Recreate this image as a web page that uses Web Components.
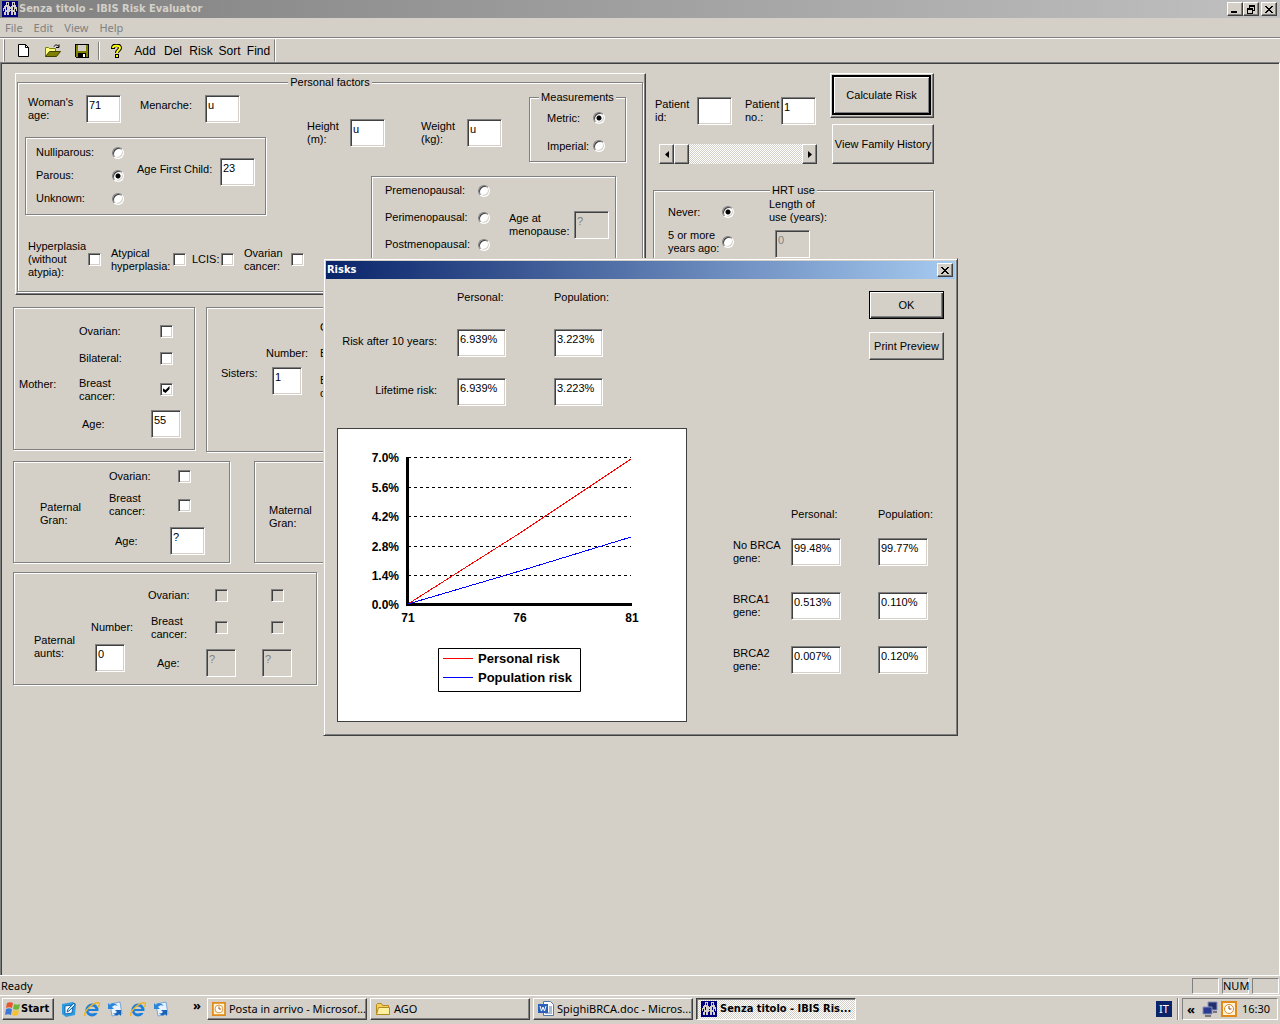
<!DOCTYPE html>
<html lang="it">
<head>
<meta charset="utf-8">
<title>Senza titolo - IBIS Risk Evaluator</title>
<style>
html,body{margin:0;height:100%;background:#d4d0c8;overflow:hidden}
body{font:11px/13px "Liberation Sans",Arial,sans-serif;color:#000}
</style>
</head>
<body>
<ibis-app></ibis-app>
<script>
const base = `
*{box-sizing:border-box}
:host{display:block}
:host([hidden]){display:none}
label,span{white-space:nowrap}
input,button{font:inherit;color:inherit;margin:0}
input[type=text]{width:35px;height:28px;padding:1px 2px 10px;border:1px solid;border-color:#808080 #fff #fff #808080;border-radius:0;background:#fff;box-shadow:inset 1px 1px #404040,inset -1px -1px #d4d0c8;outline:0}
input[type=text]:disabled{background:#d4d0c8;color:#808080}
input.s{width:30px}
input[type=checkbox]{appearance:none;width:13px;height:13px;border:1px solid;border-color:#808080 #fff #fff #808080;background:#fff;box-shadow:inset 1px 1px #404040,inset -1px -1px #d4d0c8;position:relative}
input[type=checkbox]:disabled{background:#d4d0c8}
input[type=checkbox]:checked::after{content:"";position:absolute;inset:2px;background:#000;clip-path:polygon(0 28%,43% 58%,100% 0,100% 42%,43% 100%,0 70%)}
input[type=radio]{appearance:none;width:12px;height:12px;border-radius:50%;border:1px solid;border-color:#808080 #fff #fff #808080;background:#fff;box-shadow:inset 1px 1px #404040,inset -1px -1px #d4d0c8}
input[type=radio]:checked{background:radial-gradient(circle,#000 2px,#fff 3px)}
button{padding:0;border:1px solid;border-color:#fff #404040 #404040 #fff;border-radius:0;background:#d4d0c8;box-shadow:inset -1px -1px #808080}
.g{display:grid;justify-items:start;align-items:center}
.top{align-items:start}
.two{padding-top:1px}
.one{padding-top:4px}
.mid{padding-top:5px}
`;
const ui = '"Noto Sans","Open Sans",sans-serif';
const uiBold = '"DejaVu Sans Condensed","Noto Sans",sans-serif';
function define(name, css, html){
  const t = document.createElement('template');
  t.innerHTML = `<style>${base}${css}</style>${html}`;
  customElements.define(name, class extends HTMLElement{
    constructor(){ super(); this.attachShadow({mode:'open'}).append(t.content.cloneNode(true)); }
  });
}

class GroupBox extends HTMLElement{
  constructor(){
    super();
    const title = this.getAttribute('legend');
    this.attachShadow({mode:'open'}).innerHTML = `<style>
      :host{display:block}
      fieldset{box-sizing:border-box;height:100%;margin:0;padding:0;min-width:0;border:1px solid #808080;box-shadow:1px 1px #fff,inset 1px 1px #fff}
      legend{margin:0 auto;padding:0 2px;background:#d4d0c8}
    </style><fieldset>${title?`<legend>${title}</legend>`:''}<slot></slot></fieldset>`;
  }
}
customElements.define('group-box', GroupBox);

const people = `<svg width="16" height="16" viewBox="0 0 16 16" shape-rendering="crispEdges"><path fill="#000080" d="M0 0h16v16H0z"/><path fill="#d4d0c8" d="M4 1h3v1H4zM4 2h1v2H4zM6 2h1v2H6zM10 1h3v1h-3zM10 2h1v2h-1zM12 2h1v2h-1zM3 4h4v1h1v1h1V5h1V4h4v2h1v4h-1V8h-1v3h1v3h-2v-3h-1v3H9v-4H8v1H7v3H5v-3H4v3H2v-3h1V8H2v2H1V7h1V5h1z"/><path fill="#000080" d="M4 6h1v3H4zM12 6h-1v3h1zM8 8h1v1H8z"/></svg>`;
const glyph = {
 min:`<svg width="8" height="8" shape-rendering="crispEdges"><path d="M0 6h6v2H0z"/></svg>`,
 max:`<svg width="9" height="9" shape-rendering="crispEdges"><path fill="none" stroke="#000" d="M2.5 3V1.5h5v4H6M.5 4.5h5v4h-5zM2 .5h6M0 3.5h6"/></svg>`,
 close:`<svg width="8" height="7" viewBox="0 0 8 7" shape-rendering="crispEdges"><path d="M0 0h2v1h1v1h2V1h1V0h2v1H7v1H6v1H5v1h1v1h1v1h1v1H6V6H5V5H3v1H2v1H0V6h1V5h1V4h1V3H2V2H1V1H0z"/></svg>`
};
const clock = `<svg width="16" height="16" viewBox="0 0 16 16"><path fill="#fff3d6" stroke="#e08a1c" stroke-width="2" d="M1 1h14v14H1z"/><circle cx="8" cy="8" r="4.5" fill="#fff" stroke="#d98b2b"/><path d="M8 5v3h2.500" fill="none" stroke="#8a4a00"/></svg>`;
const ie = `<svg width="16" height="16" viewBox="0 0 16 16"><circle cx="8" cy="9" r="5" fill="none" stroke="#1c7fdc" stroke-width="3"/><path d="M4 9h9" stroke="#1c7fdc" stroke-width="2"/><path d="M10 10h6v2h-6z" fill="#d4d0c8"/><path d="M1 15C-1 11 10 0 15 2c1 1 0 3-1 4" fill="none" stroke="#f0b422" stroke-width="1.500"/></svg>`;
const sync = `<svg width="16" height="16" viewBox="0 0 16 16"><path d="M3 3l10-2 2 12-10 2z" fill="#e9f3fc" stroke="#7aa6d6"/><path d="M1 2v6h6L5 6c2-2 4-2 6-1C9 2 5 1 3 4z" fill="#2b86d9"/><path d="M14 15V9H8l2 2c-1 1-2 2-4 1 2 3 5 3 6 1z" fill="#1864b8"/></svg>`;

define('title-bar', `
:host{display:flex;align-items:center;height:18px;gap:1px;padding:0 3px 0 2px;background:linear-gradient(90deg,#808080,#c0c0c0);color:#d4d0c8;font:bold 11px/16px ${uiBold}}
span{flex:1}
div{display:flex}
button{width:16px;height:14px;display:grid;place-items:center;color:#000}
button:last-child{margin-left:2px}`,
`${people}<span>Senza titolo - IBIS Risk Evaluator</span><div><button aria-label="Minimize">${glyph.min}</button><button aria-label="Restore">${glyph.max}</button><button aria-label="Close">${glyph.close}</button></div>`);

define('menu-bar', `
:host{display:flex;height:20px;padding-left:5px;gap:11px;align-items:center;border-bottom:1px solid #808080}
button{border:0;box-shadow:none;background:none;color:#808080;font:11px/14px ${ui}}`,
`<button>File</button><button>Edit</button><button>View</button><button>Help</button>`);

define('tool-bar', `
:host{display:flex;height:24px;border-top:1px solid #fff;padding-left:4px}
nav{display:flex;align-items:center;height:23px;border:1px solid;border-color:#d4d0c8 #808080 #d4d0c8 #808080;box-shadow:-1px 0 #fff,1px 0 #fff;padding:0 1px 0 4px}
button{border:0;box-shadow:none;background:none;width:29px;height:20px;display:grid;place-items:center}
button.t{width:28px;font:12px/18px "Liberation Sans Narrow","Liberation Sans",sans-serif}
.t.f{width:29px}
i{width:2px;height:18px;border-left:1px solid #808080;border-right:1px solid #fff;margin:0 2px}`,
`<nav>
<button aria-label="New"><svg width="12" height="14" viewBox="0 0 12 14"><path d="M.5.500h7l3 3v9H.5z" fill="#fff" stroke="#000"/><path d="M7.500.500v3h3" fill="none" stroke="#000"/></svg></button>
<button aria-label="Open"><svg width="16" height="14" viewBox="0 0 16 14"><path d="M.5 12.500v-9h3l1 1h6v3" fill="#ffff80" stroke="#808000"/><path d="M.5 12.500l4-5h11l-4 5z" fill="#808000" stroke="#404000"/><path d="M9 2.500c1-2 3-2 5 0m0-2v3h-3" fill="none" stroke="#000"/></svg></button>
<button aria-label="Save"><svg width="14" height="14" viewBox="0 0 14 14" shape-rendering="crispEdges"><path d="M0 0h14v14H1l-1-1z"/><path d="M1 1h2v6h8V1h2v12h-2V9H3v4H1z" fill="#808000"/><path d="M3 1h8v6H3z" fill="#d4d0c8"/><path d="M8 10h2v3H8z" fill="#fff"/></svg></button><i></i>
<button aria-label="About"><svg width="11" height="14" viewBox="0 0 11 14"><path d="M2 5V4c0-4 7-4 7 0 0 2-3 2-3 5" fill="none" stroke="#000" stroke-width="4"/><path d="M4 10h4v4H4z"/><path d="M2 4c0-3 7-3 7 0 0 2-3 2-3 5" fill="none" stroke="#ff0" stroke-width="2"/><path d="M5 11h2v2H5z" fill="#ff0"/></svg></button>
<button class="t">Add</button><button class="t">Del</button><button class="t">Risk</button><button class="t f">Sort</button><button class="t f">Find</button></nav>`);

define('personal-factors', `
:host{margin-left:2px;width:631px;padding:2px 2px 2px 1px;border:1px solid;border-color:#fff #404040 #404040 #fff;box-shadow:inset -1px -1px #808080}
.cols{display:flex;height:202px}
.l{width:289px;padding:6px 0 0 7px}
.r1{grid-template-columns:58px 54px 65px 35px;padding-left:3px}
.par{width:241px;height:78px;margin-top:14px}
.pin{display:flex;padding:3px 0 0 10px;gap:13px}
.rad{grid-template-columns:76px 12px;grid-auto-rows:23px}
.afc{grid-template-columns:83px 35px;padding-top:17px}
.r3{grid-template-columns:60px 23px 62px 19px 29px 23px 47px 13px;padding:25px 0 0 3px}
.t{grid-template-columns:43px 71px 46px 62px 97px;padding-top:2px}
.dn{margin-top:28px}
.min{grid-template-columns:46px 12px;grid-auto-rows:28px;padding:0 0 1px 17px}
.men{width:245px;height:110px;margin:14px 0 0 64px}
.mi{display:flex;gap:19px;padding-left:13px}
.mr{grid-template-columns:93px 12px;grid-auto-rows:27px}
.am{grid-template-columns:65px 35px;padding-top:34px}`,
`<group-box legend="Personal factors"><div class="cols">
<div class="l">
 <div class="g top r1"><label for="wa" class="two">Woman's<br>age:</label><input type="text" id="wa" value="71"><label for="me" class="one">Menarche:</label><input type="text" id="me" value="u"></div>
 <group-box class="par"><div class="pin"><div class="g rad">
  <label for="p1">Nulliparous:</label><input type="radio" name="p" id="p1"><label for="p2">Parous:</label><input type="radio" name="p" id="p2" checked><label for="p3">Unknown:</label><input type="radio" name="p" id="p3"></div>
  <div class="g top afc"><label for="af" class="mid">Age First Child:</label><input type="text" id="af" value="23"></div></div></group-box>
 <div class="g r3"><label for="c1">Hyperplasia<br>(without<br>atypia):</label><input type="checkbox" id="c1"><label for="c2">Atypical<br>hyperplasia:</label><input type="checkbox" id="c2"><label for="c3">LCIS:</label><input type="checkbox" id="c3"><label for="c4">Ovarian<br>cancer:</label><input type="checkbox" id="c4"></div>
</div>
<div>
 <div class="g top t"><label for="he" class="two dn">Height<br>(m):</label><input type="text" id="he" value="u" class="dn"><label for="we" class="two dn">Weight<br>(kg):</label><input type="text" id="we" value="u" class="dn">
 <group-box legend="Measurements" style="justify-self:stretch"><div class="g min"><label for="m1">Metric:</label><input type="radio" name="m" id="m1" checked><label for="m2">Imperial:</label><input type="radio" name="m" id="m2"></div></group-box></div>
 <group-box class="men"><div class="mi"><div class="g mr"><label for="n1">Premenopausal:</label><input type="radio" name="n" id="n1"><label for="n2">Perimenopausal:</label><input type="radio" name="n" id="n2"><label for="n3">Postmenopausal:</label><input type="radio" name="n" id="n3"></div>
 <div class="g top am"><label for="am" class="two">Age at<br>menopause:</label><input type="text" id="am" value="?" disabled></div></div></group-box>
</div></div></group-box>`);

define('mother-panel', `
:host{width:182px}
.g{grid-template:27px 26px 37px 32px / 60px 72px 30px;padding:10px 0 9px 5px}
.g input{justify-self:center}
.m{grid-row:1/5;padding-top:10px}
.a{padding-left:3px}`,
`<group-box><div class="g"><span class="m">Mother:</span><label for="o">Ovarian:</label><input type="checkbox" id="o"><label for="b">Bilateral:</label><input type="checkbox" id="b"><label for="c">Breast<br>cancer:</label><input type="checkbox" id="c" checked><label for="a" class="a">Age:</label><input type="text" class="s" id="a" value="55"></div></group-box>`);

define('sisters-panel', `
:host{width:300px}
.g{grid-template:26px 27px 39px / 45px 54px 80px;padding:6px 0 45px 14px}
.n{grid-area:2/2}.s1{grid-area:3/1;align-self:start}.g input{grid-area:3/2;align-self:start;margin-left:6px}
.c{grid-column:3}.o{grid-row:1}.b{grid-row:2}.r{grid-row:3}`,
`<group-box><div class="g"><label for="n" class="n">Number:</label><span class="s1">Sisters:</span><input type="text" class="s" id="n" value="1"><span class="c o">Ovarian:</span><span class="c b">Bilateral:</span><span class="c r">Breast<br>cancer:</span></div></group-box>`);

define('gran-panel', `
:host{width:217px}
.g{grid-template:28px 30px 42px / 69px 61px 36px;padding-left:26px}
.m{grid-row:1/4;padding-top:4px}
.a{padding-left:6px}
input[type=checkbox]{margin-left:8px}`,
`<group-box><div class="g"><span class="m">Paternal<br>Gran:</span><label for="o">Ovarian:</label><input type="checkbox" id="o"><label for="c">Breast<br>cancer:</label><input type="checkbox" id="c"><label for="a" class="a">Age:</label><input type="text" id="a" value="?"></div></group-box>`);

define('maternal-panel', `
:host{width:217px}
div{display:flex;align-items:center;height:100px;padding:9px 0 0 14px}`,
`<group-box><div><span>Maternal<br>Gran:</span></div></group-box>`);

define('aunts-panel', `
:host{width:304px}
.g{grid-template:32px 33px 38px / 57px 57px 58px 56px 30px;padding:6px 0 2px 20px}
.m{grid-area:2/1/4/2}.n{grid-area:2/2}.ni{grid-area:3/2;align-self:start;margin-left:4px}
.c{grid-column:3}.a{padding-left:9px}.b{padding-left:3px}
.x{grid-column:4}.y{grid-column:5}.r1{grid-row:1}.r2{grid-row:2}.r3{grid-row:3}
input[type=checkbox]{margin-left:9px}`,
`<group-box><div class="g"><span class="m">Paternal<br>aunts:</span><label for="n" class="n">Number:</label><input type="text" class="s ni" id="n" value="0">
<label for="o" class="c r1">Ovarian:</label><input class="x r1" type="checkbox" id="o" disabled><input class="y r1" type="checkbox" disabled aria-label="Ovarian, second aunt">
<label for="b" class="c b r2">Breast<br>cancer:</label><input class="x r2" type="checkbox" id="b" disabled><input class="y r2" type="checkbox" disabled aria-label="Breast cancer, second aunt">
<label for="a" class="c a r3">Age:</label><input class="x r3 s" type="text" id="a" value="?" disabled><input class="y r3 s" type="text" value="?" disabled aria-label="Age, second aunt"></div></group-box>`);

define('scroll-strip', `
:host{display:flex;height:20px;background:repeating-conic-gradient(#fff 0 25%,#d4d0c8 0 50%) 0 0/2px 2px}
button{width:15px;display:grid;place-items:center}`,
`<button aria-label="Previous patient"><svg width="4" height="7"><path d="M4 0v7L0 3.500z"/></svg></button><button aria-label="Position"></button><span style="flex:1"></span><button aria-label="Next patient"><svg width="4" height="7"><path d="M0 0v7l4-3.500z"/></svg></button>`);

define('patient-panel', `
:host{width:281px}
.top1{display:flex;justify-content:space-between;height:91px}
.pt{padding:24px 0 0 2px}
.ids{grid-template-columns:42px 48px 36px 36px}
scroll-strip{margin:19px 0 0 4px}
.btns{display:flex;flex-direction:column;align-items:flex-end;gap:6px}
.def{padding:1px 2px 2px 1px;border:1px solid;border-color:#fff #404040 #404040 #fff;box-shadow:inset -1px -1px #808080}
.def button{width:99px;height:40px;border:2px solid #000;box-shadow:inset 1px 1px #fff,inset -1px -1px #808080}
.vf{width:102px;height:40px}
group-box{height:110px;margin-top:20px}
.h{display:flex;padding-left:14px}
.hr{grid-template:30px 30px / 54px 47px}
.hl{padding-top:1px}
.hl input{display:block;margin:6px 0 0 6px}`,
`<div class="top1"><div class="pt"><div class="g top ids"><label for="i" class="two">Patient<br>id:</label><input type="text" id="i"><label for="n" class="two">Patient<br>no.:</label><input type="text" id="n" value="1"></div><scroll-strip></scroll-strip></div>
<div class="btns"><div class="def"><button>Calculate Risk</button></div><button class="vf">View Family History</button></div></div>
<group-box legend="HRT use"><div class="h"><div class="g hr"><label for="a">Never:</label><input type="radio" name="h" id="a" checked><label for="b">5 or more<br>years ago:</label><input type="radio" name="h" id="b"></div><div class="hl"><label for="l">Length of<br>use (years):</label><input type="text" id="l" value="0" disabled></div></div></group-box>`);

define('risk-chart', `
:host{border:1px solid #404040;background:#fff}
svg{display:block;width:100%;height:292px}
text{font:bold 12px "Liberation Sans",Arial,sans-serif}
.k{font-size:13px}.e{text-anchor:end}.m{text-anchor:middle}`,
`<svg viewBox="338 429 348 292" role="img" aria-label="Risk by age">
<g stroke="#000" stroke-dasharray="3 3" shape-rendering="crispEdges"><path d="M408 457.500h223M408 487.500h223M408 516.500h223M408 546.500h223M408 575.500h223"/></g>
<path d="M407.500 457v148M406 604.500h226" stroke="#000" stroke-width="3" fill="none" shape-rendering="crispEdges"/>
<path d="M408 604L520 533 631 459" stroke="#f00" fill="none" shape-rendering="crispEdges"/><path d="M408 604L520 571 631 537" stroke="#00f" fill="none" shape-rendering="crispEdges"/>
<g class="e"><text x="399" y="462">7.0%</text><text x="399" y="492">5.6%</text><text x="399" y="521">4.2%</text><text x="399" y="551">2.8%</text><text x="399" y="580">1.4%</text><text x="399" y="609">0.0%</text></g>
<g class="m"><text x="408" y="622">71</text><text x="520" y="622">76</text><text x="632" y="622">81</text></g>
<path d="M438.500 648.500h142v43h-142z" fill="none" stroke="#000"/><path d="M443 658.500h30" stroke="#f00"/><path d="M443 677.500h30" stroke="#00f"/>
<text class="k" x="478" y="663">Personal risk</text><text class="k" x="478" y="682">Population risk</text></svg>`);

define('risk-dialog', `
:host{width:635px;background:#d4d0c8;border:1px solid;border-color:#d4d0c8 #404040 #404040 #d4d0c8;box-shadow:inset 1px 1px #fff,inset -1px -1px #808080;padding:2px}
header{display:flex;justify-content:space-between;align-items:center;height:18px;padding:0 2px 0 1px;background:linear-gradient(90deg,#0a246a,#a6caf0);color:#fff;font:bold 11px/16px ${uiBold}}
header button{width:16px;height:14px;display:grid;place-items:center}
.body{display:flex;justify-content:space-between;padding:12px 11px 11px}
.l{width:350px}
.rt{grid-template:38px 49px 28px / 120px 97px 51px;margin-bottom:22px}
.rt label{justify-self:end;padding:6px 20px 0 0}
.p{grid-column:2}
.rt input{width:49px}
.r{display:flex;flex-direction:column;justify-content:space-between;align-items:flex-end;padding-bottom:48px}
.bt{display:grid;gap:13px}
.bt button{width:75px;height:28px}
.bt .ok{border:1px solid #000;box-shadow:inset 1px 1px #fff,inset -1px -1px #404040,inset -2px -2px #808080}
.br{grid-template:30px 54px 54px 28px / 58px 87px 50px;margin-right:16px}
.br label{padding-top:1px}
.br input{width:50px}`,
`<header><span>Risks</span><button aria-label="Close">${glyph.close}</button></header>
<div class="body"><div class="l"><div class="g top rt"><span class="p">Personal:</span><span>Population:</span>
<label for="r">Risk after 10 years:</label><input type="text" readonly id="r" value="6.939%"><input type="text" readonly value="3.223%" aria-label="Population risk after 10 years">
<label for="l">Lifetime risk:</label><input type="text" readonly id="l" value="6.939%"><input type="text" readonly value="3.223%" aria-label="Population lifetime risk"></div>
<risk-chart></risk-chart></div>
<div class="r"><div class="bt"><button class="ok">OK</button><button>Print Preview</button></div>
<div class="g top br"><span class="p">Personal:</span><span>Population:</span>
<label for="a">No BRCA<br>gene:</label><input type="text" readonly id="a" value="99.48%"><input type="text" readonly value="99.77%" aria-label="Population, no BRCA gene">
<label for="b">BRCA1<br>gene:</label><input type="text" readonly id="b" value="0.513%"><input type="text" readonly value="0.110%" aria-label="Population, BRCA1 gene">
<label for="c">BRCA2<br>gene:</label><input type="text" readonly id="c" value="0.007%"><input type="text" readonly value="0.120%" aria-label="Population, BRCA2 gene"></div></div></div>`);

define('status-bar', `
:host{display:flex;align-items:center;gap:3px;height:20px;padding:0 1px;border-top:1px solid #fff;font:11px/14px ${ui}}
.r{flex:1}
.p{width:27px;height:16px;border:1px solid;border-color:#808080 #fff #fff #808080;text-align:center;line-height:14px}`,
`<span class="r">Ready</span><span class="p"></span><span class="p">NUM</span><span class="p"></span>`);

define('task-bar', `
:host{display:flex;align-items:flex-start;height:29px;padding:2px 2px 0;border-top:1px solid #fff;font:11px/16px ${ui}}
button{display:flex;align-items:center;gap:3px;height:22px}
.st{width:52px;padding-left:2px;font:bold 11px/16px ${uiBold};gap:0}
.q{display:flex;gap:7px;padding:0 24px 0 7px}
.q button{border:0;box-shadow:none;background:none}
b{width:14px;height:22px;line-height:14px;font-size:13px}
.tk{display:flex;flex:1;gap:3px}
.tk button{width:160px;padding:0 0 0 4px}
.tk .on{border-color:#404040 #fff #fff #404040;box-shadow:inset 1px 1px #808080;font:bold 11px/16px ${uiBold};background:repeating-conic-gradient(#fff 0 25%,#d4d0c8 0 50%) 0 0/2px 2px}
.it{background:#0a246a;color:#fff;width:16px;text-align:center;margin:3px 5px 0 0}
.sep{width:2px;height:22px;border-left:1px solid #808080;border-right:1px solid #fff;margin-right:3px}
.tray{display:flex;align-items:center;gap:3px;width:96px;height:22px;padding:0 7px 0 4px;border:1px solid;border-color:#808080 #fff #fff #808080}
.tray span:first-child{width:12px;font-weight:bold;font-size:13px}
.tray span:last-child{flex:1;text-align:right}`,
`<button class="st"><svg width="16" height="16" viewBox="0 0 16 16"><path d="M2 2c2-1 4-1 6 0L7 7C5 6 3 6 1 7z" fill="#e8552d"/><path d="M9 3c2 1 4 1 6 0l-1 5c-2 1-4 1-6 0z" fill="#6fb53a"/><path d="M1 8c2-1 4-1 6 0l-1 6c-2-1-4-1-6 0z" fill="#3b78d8"/><path d="M8 9c2 1 4 1 6 0l-1 5c-2 1-4 1-6 0z" fill="#f6c12c"/></svg><span>Start</span></button>
<div class="q"><button aria-label="Desktop"><svg width="16" height="16" viewBox="0 0 16 16"><path d="M1 3l11-2 3 2-1 11-9 2-4-3z" fill="#2f9be0"/><path d="M4 5l8-1-1 8-7 1z" fill="#fff" stroke="#1668ad"/><path d="M6 11l1-3 6-6 1 2-6 6z" fill="#cfe8fa" stroke="#1668ad"/></svg></button><button aria-label="Internet Explorer">${ie}</button><button aria-label="Outlook Express">${sync}</button><button aria-label="Internet">${ie}</button><button aria-label="Mail">${sync}</button></div>
<b>»</b>
<div class="tk"><button>${clock}<span>Posta in arrivo - Microsof...</span></button>
<button><svg width="16" height="16" viewBox="0 0 16 16"><path d="M1.500 13.500v-10l1-1h4l1 2h6v9z" fill="#f5d060" stroke="#b58a1c"/><path d="M1.500 13.500l2-7h11v7z" fill="#fff0a0" stroke="#b58a1c"/></svg><span>AGO</span></button>
<button><svg width="16" height="16" viewBox="0 0 16 16"><path d="M5.500.500h7l3 3v11h-10z" fill="#fff" stroke="#5577aa"/><path d="M11 6h3M11 8h3M11 10h3M7 12h7" stroke="#5577aa"/><path d="M0 3h10v9H0z" fill="#2b5fb8"/><path d="M2 5l1.500 5L5 6l1.500 4L8 5" fill="none" stroke="#fff"/></svg><span>SpighiBRCA.doc - Micros...</span></button>
<button class="on">${people}<span>Senza titolo - IBIS Ris...</span></button></div>
<span class="it">IT</span><i class="sep"></i>
<div class="tray"><span>«</span><svg width="16" height="16" viewBox="0 0 16 16"><path d="M6 1h9v8H6z" fill="#23306e" stroke="#8a93bb"/><path d="M1 6h9v7H1z" fill="#2a3b90" stroke="#8a93bb"/><path d="M3 15h6M11 11h4" stroke="#777" stroke-width="2"/></svg>${clock}<span>16:30</span></div>`);

define('ibis-app', `
:host{display:grid;grid-template-rows:18px 20px 24px 1fr 20px 29px;height:100vh;position:relative;overflow:hidden}
main{border:1px solid #808080;border-right-color:#fff;border-bottom:0;box-shadow:inset 1px 1px #404040;display:flex;align-items:flex-start;gap:7px;padding:10px 0 0 12px;overflow:hidden}
.left{display:grid;gap:12px}
.rel{display:grid;gap:9px}
.row{display:flex;align-items:flex-start}
.a{gap:11px}.b{gap:24px}
risk-dialog{position:absolute;left:323px;top:258px}`,
`<title-bar></title-bar><menu-bar></menu-bar><tool-bar></tool-bar>
<main><div class="left"><personal-factors></personal-factors>
<div class="rel"><div class="row a"><mother-panel></mother-panel><sisters-panel></sisters-panel></div>
<div class="row b"><gran-panel></gran-panel><maternal-panel></maternal-panel></div>
<aunts-panel></aunts-panel></div></div>
<patient-panel></patient-panel></main>
<status-bar></status-bar><task-bar></task-bar><risk-dialog></risk-dialog>`);
</script>
</body>
</html>
